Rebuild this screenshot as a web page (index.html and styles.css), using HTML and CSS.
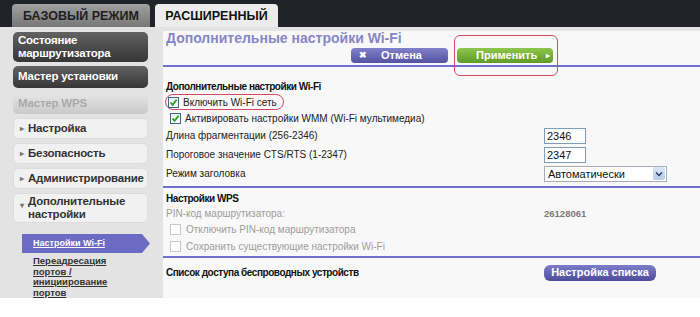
FILE: index.html
```html
<!DOCTYPE html>
<html lang="ru">
<head>
<meta charset="utf-8">
<title>Дополнительные настройки Wi-Fi</title>
<link rel="stylesheet" href="styles.css">
</head>
<body>
<header class="topbar">
  <div class="tab tab-basic">БАЗОВЫЙ РЕЖИМ</div>
  <div class="tab tab-adv">РАСШИРЕННЫЙ</div>
</header>
<div class="main">
  <nav class="sidebar">
    <div class="nav-dark two">Состояние<br>маршрутизатора</div>
    <div class="nav-dark">Мастер установки</div>
    <div class="nav-disabled">Мастер WPS</div>
    <div class="nav-light"><span class="arr">▸</span>Настройка</div>
    <div class="nav-light"><span class="arr">▸</span>Безопасность</div>
    <div class="nav-light"><span class="arr">▸</span>Администрирование</div>
    <div class="nav-light two"><span class="arr down">▾</span><span>Дополнительные<br>настройки</span></div>
    <div class="sub">
      <a class="sub-active">Настройки Wi-Fi</a>
      <a class="sub-link">Переадресация<br>портов /<br>инициирование<br>портов</a>
    </div>
  </nav>
  <section class="content">
    <div class="head">
      <div class="title">Дополнительные настройки Wi-Fi</div>
      <div class="actions">
        <div class="btn btn-cancel"><span class="x">✖</span>Отмена</div>
        <div class="btn btn-apply">Применить<span class="tri">▸</span></div>
      </div>
    </div>
    <div class="sect s1">
      <div class="row h">Дополнительные настройки Wi-Fi</div>
      <div class="row"><span class="ring"><span class="cb"><svg viewBox="0 0 9 9" width="9" height="9"><path d="M1.5 4.5 L3.6 6.8 L7.6 1.8" fill="none" stroke="#23a023" stroke-width="1.8"/></svg></span>Включить Wi-Fi сеть</span></div>
      <div class="row ind"><span class="cb"><svg viewBox="0 0 9 9" width="9" height="9"><path d="M1.5 4.5 L3.6 6.8 L7.6 1.8" fill="none" stroke="#23a023" stroke-width="1.8"/></svg></span>Активировать настройки WMM (Wi-Fi мультимедиа)</div>
      <div class="row f"><span class="lbl">Длина фрагментации (256-2346)</span><input class="inp" value="2346"></div>
      <div class="row f"><span class="lbl">Пороговое значение CTS/RTS (1-2347)</span><input class="inp" value="2347"></div>
      <div class="row f"><span class="lbl">Режим заголовка</span><div class="sel"><span>Автоматически</span><span class="sel-btn"><svg viewBox="0 0 8 6" width="8" height="6"><path d="M1 1.5 L4 4.5 L7 1.5" fill="none" stroke="#2a3a6a" stroke-width="1.4"/></svg></span></div></div>
    </div>
    <div class="sect s2">
      <div class="row h">Настройки WPS</div>
      <div class="row dis f"><span class="lbl">PIN-код маршрутизатора:</span><span class="pin">26128061</span></div>
      <div class="row dis ind"><span class="cb off"></span>Отключить PIN-код маршрутизатора</div>
      <div class="row dis ind"><span class="cb off"></span>Сохранить существующие настройки Wi-Fi</div>
    </div>
    <div class="sect s3">
      <div class="row h f"><span class="lbl">Список доступа беспроводных устройств</span><div class="btn btn-list">Настройка списка</div></div>
    </div>
  </section>
</div>
</body>
</html>
```
FILE: styles.css
```css
body {
  margin: 0;
  width: 700px;
  background: #fff;
  font-family: "Liberation Sans", Arial, sans-serif;
}
.topbar {
  height: 27px;
  background: #202327;
  display: flex;
  align-items: flex-end;
  padding-left: 12px;
  gap: 5px;
  box-sizing: border-box;
}
.tab {
  height: 23px;
  border-radius: 4px 4px 0 0;
  font-weight: bold;
  font-size: 12.5px;
  line-height: 24px;
  text-align: center;
}
.tab-basic {
  width: 138px;
  background: linear-gradient(#a0a0a0, #777);
  color: #1e1e1e;
}
.tab-adv {
  width: 123px;
  background: #ececec;
  color: #111;
}
.main {
  display: flex;
  height: 271px;
  background: #e3e3e3;
}
.sidebar {
  width: 163px;
  flex: none;
  box-sizing: border-box;
  padding: 5px 0 0 13px;
  display: flex;
  flex-direction: column;
  gap: 4px;
}
.nav-dark, .nav-disabled, .nav-light {
  width: 135px;
  box-sizing: border-box;
  border-radius: 5px;
  font-weight: bold;
  font-size: 11.5px;
  letter-spacing: -0.2px;
  line-height: 13px;
}
.nav-dark {
  background: linear-gradient(#626262, #363636);
  color: #fff;
  padding: 4px 5px;
  height: 22px;
}
.nav-dark.two { height: 30px; padding: 2px 5px; }
.nav-disabled {
  height: 21px;
  margin-top: 1px;
  padding: 4px 5px;
  background: linear-gradient(#e6e6e6, #c9c9c9);
  color: #a9a9a9;
}
.nav-light {
  height: 21px;
  padding: 3px 6px;
  background: #f1f1f1;
  border: 1px solid #dcdcdc;
  color: #333;
  display: flex;
  align-items: flex-start;
}
.nav-light.two { height: 30px; padding: 1px 6px; }
.arr {
  font-size: 8px;
  color: #777;
  width: 8px;
  flex: none;
  line-height: 13px;
}
.arr.down { margin-top: 4px; }
.sub {
  display: flex;
  flex-direction: column;
  margin-top: 7px;
  gap: 3px;
}
.sub-active {
  width: 128px;
  height: 19px;
  margin-left: 9px;
  box-sizing: border-box;
  padding-left: 11px;
  background: #6b6bc3;
  clip-path: polygon(0 0, 120px 0, 128px 50%, 120px 100%, 0 100%);
  color: #fff;
  font-size: 9px;
  font-weight: bold;
  line-height: 19px;
  text-decoration: underline;
}
.sub-link {
  margin-left: 20px;
  color: #333;
  font-size: 9.5px;
  font-weight: bold;
  line-height: 10.5px;
  text-decoration: underline;
}
.content {
  flex: 1;
  margin-top: 4px;
  background: #f8f8f8;
  font-size: 10px;
  color: #222;
}
.head {
  height: 34px;
  border-bottom: 2px solid #6f6fcf;
}
.title {
  padding-left: 3px;
  font-size: 14px;
  font-weight: bold;
  color: #8786c6;
  line-height: 14px;
}
.actions {
  display: flex;
  gap: 9px;
  margin-top: 3px;
  padding-left: 188px;
}
.btn {
  height: 15px;
  border-radius: 4px;
  color: #fff;
  font-weight: bold;
  font-size: 11px;
  line-height: 15px;
  box-sizing: border-box;
  display: flex;
  align-items: center;
}
.btn-cancel {
  width: 97px;
  background: linear-gradient(#8080cc, #5252a0);
  padding-left: 8px;
}
.x { font-size: 9px; margin-right: 14px; }
.btn-apply {
  width: 96px;
  position: relative;
  background: linear-gradient(#8ec64c, #5f9a27);
  padding-left: 19px;
}
.btn-apply::after {
  content: "";
  position: absolute;
  left: -3px;
  right: -5px;
  top: -13px;
  bottom: -13px;
  border: 1.5px solid #cf4a63;
  border-radius: 6px;
}
.tri { font-size: 8px; margin-left: 9px; }
.sect {
  display: flex;
  flex-direction: column;
  padding-left: 3px;
  border-bottom: 2px solid #6f6fcf;
  box-sizing: border-box;
}
.s1 { height: 121px; padding-top: 12px; gap: 2px; }
.s2 { height: 70px; padding-top: 3px; }
.s3 { height: 40px; padding-top: 6px; border-bottom: none; }
.row {
  display: flex;
  align-items: center;
  height: 14px;
  flex: none;
}
.row.h { font-weight: bold; color: #111; font-size: 10px; letter-spacing: -0.45px; }
.row.h .btn { letter-spacing: 0; }
.row.f { height: 17px; }
.lbl { width: 378px; flex: none; }
.ring {
  display: inline-flex;
  align-items: center;
  height: 14px;
  margin-left: -1px;
  padding: 0 6px 0 2px;
  border: 1px solid #d24a64;
  border-radius: 8px;
}
.ind { padding-left: 4px; }
.cb {
  width: 9px;
  height: 9px;
  border: 1px solid #3a6a8a;
  background: linear-gradient(#e8eef0, #fff);
  margin-right: 4px;
  display: inline-flex;
  flex: none;
}
.cb.off {
  border-color: #c8c8c8;
  background: #fff;
  margin-right: 5px;
}
.inp {
  width: 42px;
  height: 16px;
  box-sizing: border-box;
  border: 1px solid #7f9db9;
  background: #fff;
  font-family: "Liberation Sans", Arial, sans-serif;
  font-size: 11px;
  padding: 0 2px;
  margin: 0;
  color: #111;
}
.sel {
  width: 123px;
  height: 16px;
  box-sizing: border-box;
  border: 1px solid #a5acb5;
  background: #fff;
  font-size: 11px;
  color: #111;
  display: flex;
  align-items: center;
  justify-content: space-between;
  padding-left: 3px;
}
.sel-btn {
  width: 12px;
  height: 13px;
  margin-right: 1px;
  background: linear-gradient(#dbe6f8, #b7c9ec);
  border-radius: 2px;
  display: flex;
  align-items: center;
  justify-content: center;
}
.dis { color: #9d9d9d; }
.s2 .row { height: 15px; }
.s2 .row.f { height: 15px; }
.s2 .ind { height: 17px; }
.pin { font-weight: bold; color: #7a7a7a; font-size: 9.5px; }
.btn-list {
  width: 112px;
  height: 16px;
  justify-content: center;
  background: linear-gradient(#7c7cc8, #4c4c99);
  border-radius: 6px;
  font-size: 11px;
}
```
